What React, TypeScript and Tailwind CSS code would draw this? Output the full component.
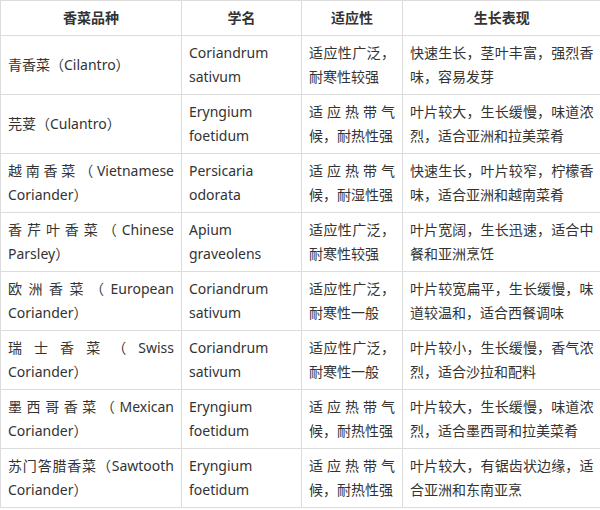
import React from "react";

const rows = [
  ["青香菜（Cilantro）", "Coriandrum sativum", "适应性广泛，耐寒性较强", "快速生长，茎叶丰富，强烈香味，容易发芽"],
  ["芫荽（Culantro）", "Eryngium foetidum", "适应热带气候，耐热性强", "叶片较大，生长缓慢，味道浓烈，适合亚洲和拉美菜肴"],
  ["越南香菜（Vietnamese Coriander）", "Persicaria odorata", "适应热带气候，耐湿性强", "快速生长，叶片较窄，柠檬香味，适合亚洲和越南菜肴"],
  ["香芹叶香菜（Chinese Parsley）", "Apium graveolens", "适应性广泛，耐寒性较强", "叶片宽阔，生长迅速，适合中餐和亚洲烹饪"],
  ["欧洲香菜（European Coriander）", "Coriandrum sativum", "适应性广泛，耐寒性一般", "叶片较宽扁平，生长缓慢，味道较温和，适合西餐调味"],
  ["瑞士香菜（Swiss Coriander）", "Coriandrum sativum", "适应性广泛，耐寒性一般", "叶片较小，生长缓慢，香气浓烈，适合沙拉和配料"],
  ["墨西哥香菜（Mexican Coriander）", "Eryngium foetidum", "适应热带气候，耐热性强", "叶片较大，生长缓慢，味道浓烈，适合墨西哥和拉美菜肴"],
  ["苏门答腊香菜（Sawtooth Coriander）", "Eryngium foetidum", "适应热带气候，耐热性强", "叶片较大，有锯齿状边缘，适合亚洲和东南亚烹"],
];

const headers = ["香菜品种", "学名", "适应性", "生长表现"];

export default function App() {
  return (
    <div
      className="w-[600px] h-[510px] overflow-hidden bg-white text-[#333333]"
      style={{ fontFamily: '"Noto Sans", "Noto Sans CJK SC", sans-serif' }}
    >
      <table className="w-[600px] table-fixed border-collapse text-[14px] leading-6">
        <colgroup>
          <col className="w-[181px]" />
          <col className="w-[120px]" />
          <col className="w-[101px]" />
          <col className="w-[198px]" />
        </colgroup>
        <thead>
          <tr>
            {headers.map((h, i) => (
              <th
                key={h}
                className={`border border-[#dcdcdc] px-[7px] py-[5px] text-center font-bold ${
                  i === 3 ? "border-r-0" : ""
                }`}
              >
                {h}
              </th>
            ))}
          </tr>
        </thead>
        <tbody>
          {rows.map((r, ri) => (
            <tr key={ri}>
              {r.map((c, ci) => (
                <td
                  key={ci}
                  className={`border border-[#dcdcdc] px-[7px] py-[5px] align-middle text-justify ${
                    ci === 3 ? "border-r-0" : ""
                  }`}
                >
                  {c}
                </td>
              ))}
            </tr>
          ))}
        </tbody>
      </table>
    </div>
  );
}
